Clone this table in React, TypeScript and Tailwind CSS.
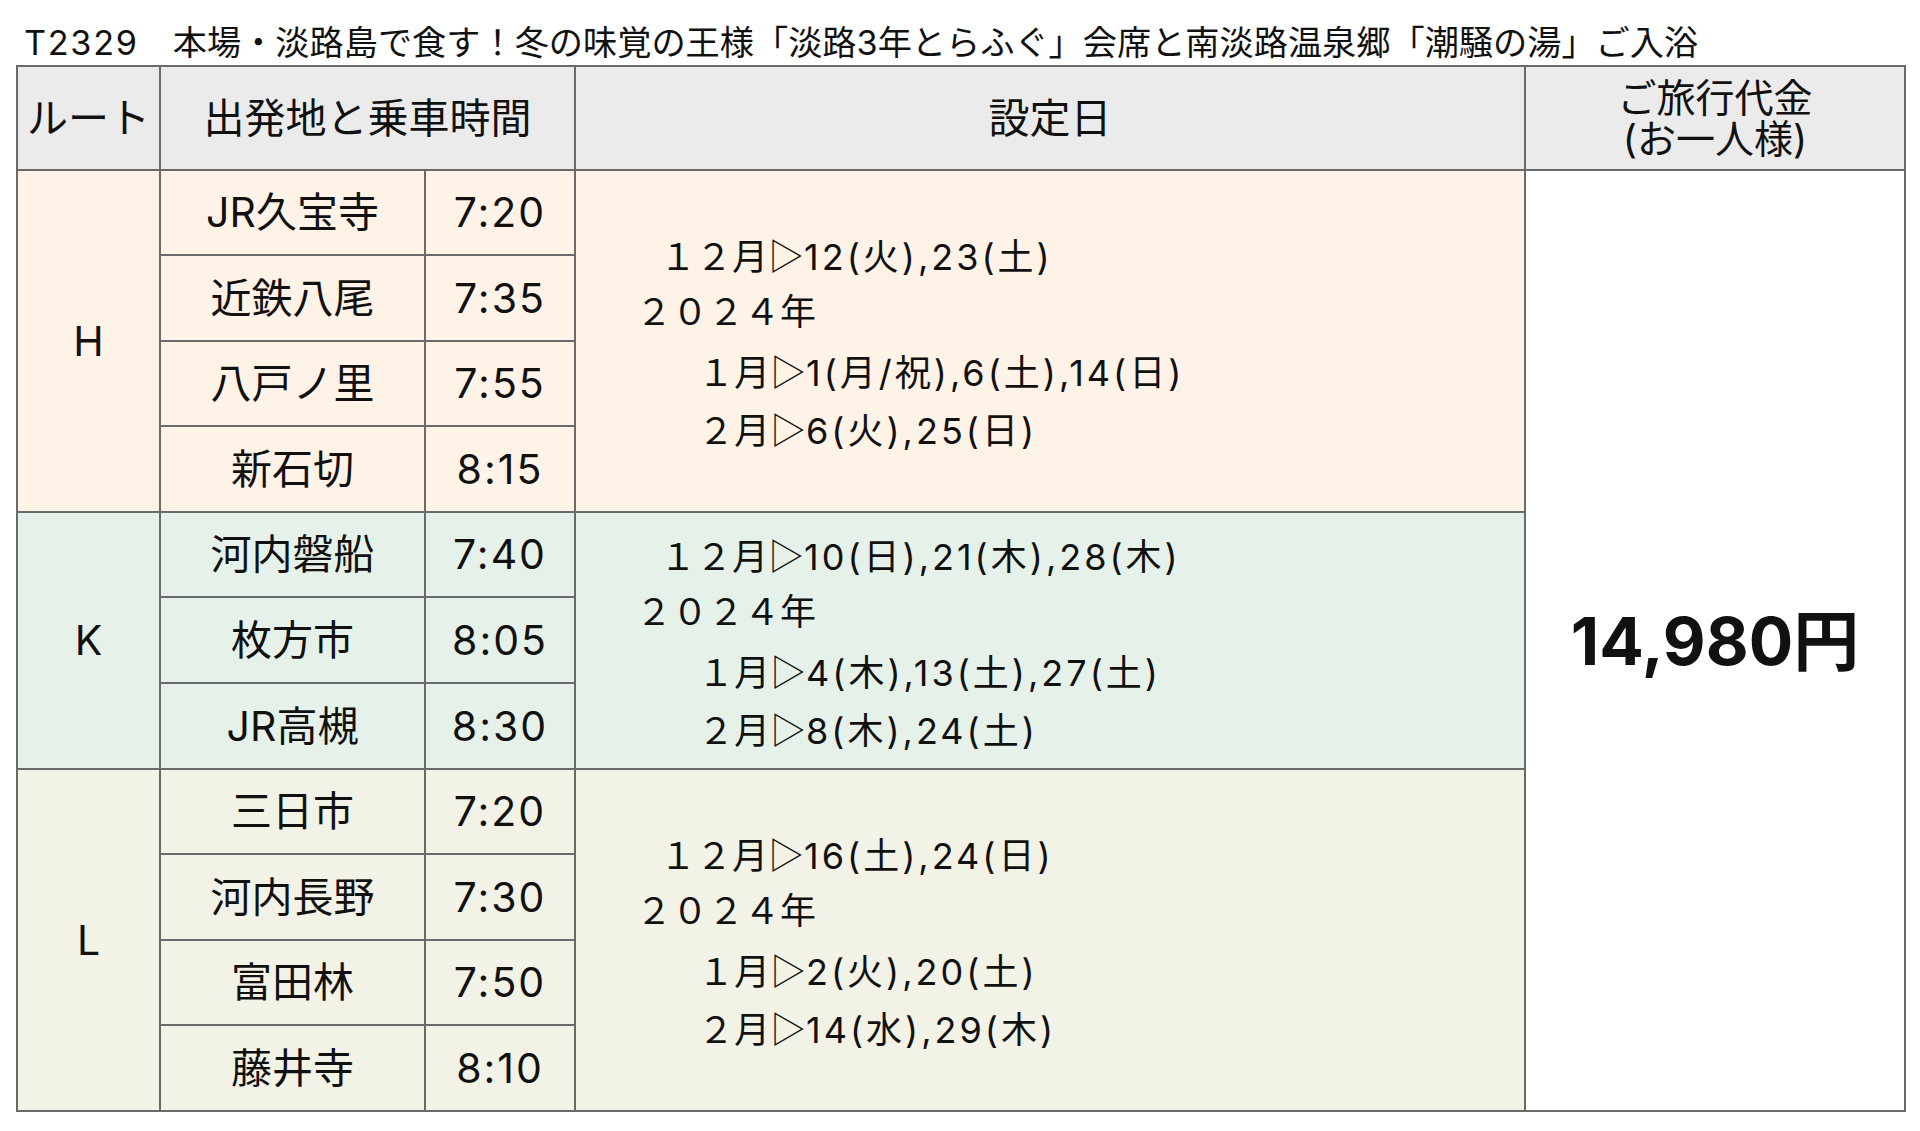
import React from "react";

type Section = {
  letter: string;
  bg: string;
  span: string;
  stations: [string, string][];
  d12: string;
  d1: string;
  d2: string;
};

const sections: Section[] = [
  {
    letter: "H",
    bg: "bg-[#fff3e8]",
    span: "row-span-4",
    stations: [
      ["JR久宝寺", "7:20"],
      ["近鉄八尾", "7:35"],
      ["八戸ノ里", "7:55"],
      ["新石切", "8:15"],
    ],
    d12: "12(火),23(土)",
    d1: "1(月/祝),6(土),14(日)",
    d2: "6(火),25(日)",
  },
  {
    letter: "K",
    bg: "bg-[#e6f2e9]",
    span: "row-span-3",
    stations: [
      ["河内磐船", "7:40"],
      ["枚方市", "8:05"],
      ["JR高槻", "8:30"],
    ],
    d12: "10(日),21(木),28(木)",
    d1: "4(木),13(土),27(土)",
    d2: "8(木),24(土)",
  },
  {
    letter: "L",
    bg: "bg-[#f3f2e7]",
    span: "row-span-4",
    stations: [
      ["三日市", "7:20"],
      ["河内長野", "7:30"],
      ["富田林", "7:50"],
      ["藤井寺", "8:10"],
    ],
    d12: "16(土),24(日)",
    d1: "2(火),20(土)",
    d2: "14(水),29(木)",
  },
];

function Tri() {
  return <span className="font-['Noto_Sans_CJK_JP',sans-serif]">▷</span>;
}

function Dates({ text }: { text: string }) {
  return <span className="tracking-[3px]">{text}</span>;
}

export default function App() {
  return (
    <div className="min-h-[1131px] w-[1920px] bg-white text-[#111] font-['Inter','Noto_Sans_CJK_JP',sans-serif]">
      <div className="h-[65px] pl-[24px] pt-[21px] text-[34.2px] leading-[44px] whitespace-nowrap">
        <span className="tracking-[1.7px]">T2329</span>　本場・淡路島で食す！冬の味覚の王様「淡路3年とらふぐ」会席と南淡路温泉郷「潮騒の湯」ご入浴
      </div>
      <div className="ml-[16px] w-[1890px] bg-[#6a6a6a] p-[2px]">
        <div className="grid grid-cols-[141px_263px_148px_948px_378px] grid-rows-[102px_83px_84px_83px_84px_83px_84px_84px_83px_84px_83px_84px] gap-[2px]">
          <div className="flex items-center justify-center bg-[#ebebeb] text-[41px] leading-none">ルート</div>
          <div className="col-span-2 flex items-center justify-center bg-[#ebebeb] text-[41px] leading-none">出発地と乗車時間</div>
          <div className="flex items-center justify-center bg-[#ebebeb] text-[41px] leading-none">設定日</div>
          <div className="flex items-center justify-center bg-[#ebebeb]">
            <div className="text-center text-[39px] leading-[41px]">
              ご旅行代金
              <br />
              (お一人様)
            </div>
          </div>
          {sections.map((s, si) => (
            <React.Fragment key={s.letter}>
              {s.stations.map(([name, time], i) => (
                <React.Fragment key={name}>
                  {i === 0 && (
                    <div className={`${s.span} ${s.bg} flex items-center justify-center text-[41px] leading-none`}>
                      {s.letter}
                    </div>
                  )}
                  <div className={`${s.bg} flex items-center justify-center text-[41px] leading-none`}>{name}</div>
                  <div className={`${s.bg} flex items-center justify-center text-[41px] leading-none tracking-[2px]`}>{time}</div>
                  {i === 0 && (
                    <div className={`${s.span} ${s.bg} flex items-center pl-[60px]`}>
                      <div className="text-[36px] whitespace-nowrap">
                        <div className="ml-[24px] h-[58px] leading-[58px]">
                          １２月<Tri /><Dates text={s.d12} />
                        </div>
                        <div className="h-[58px] leading-[58px]">２０２４年</div>
                        <div className="ml-[62px] h-[58px] leading-[58px]">
                          １月<Tri /><Dates text={s.d1} />
                        </div>
                        <div className="ml-[62px] h-[58px] leading-[58px]">
                          ２月<Tri /><Dates text={s.d2} />
                        </div>
                      </div>
                    </div>
                  )}
                  {si === 0 && i === 0 && (
                    <div className="row-span-11 flex items-center justify-center bg-white text-[66px] font-bold leading-none">
                      14,980円
                    </div>
                  )}
                </React.Fragment>
              ))}
            </React.Fragment>
          ))}
        </div>
      </div>
    </div>
  );
}
